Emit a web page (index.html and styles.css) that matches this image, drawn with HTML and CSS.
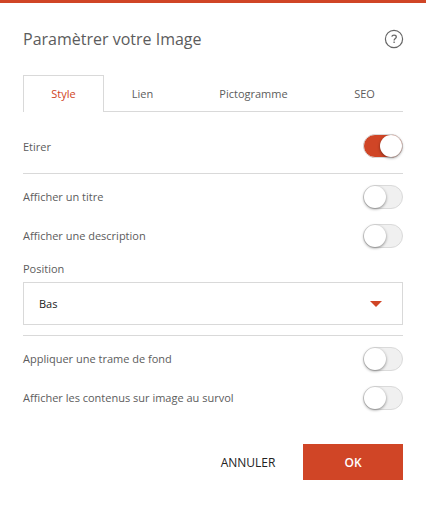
FILE: index.html
```html
<!DOCTYPE html>
<html lang="fr">
<head>
	<meta charset="utf-8">
	<title>Paramètrer votre Image</title>
	<link rel="stylesheet" href="styles.css">
</head>
<body>
<section class="panel">
	<header class="header">
		<h1>Paramètrer votre Image</h1>
		<svg class="help" width="20" height="20" viewBox="0 0 20 20" fill="none" stroke="#666">
			<circle cx="10" cy="10" r="8.6" stroke-width="1.2"/>
			<path d="M7.8 7.7C8 6.7 8.8 6.2 10 6.2c1.400 0 2.300.7 2.300 1.800 0 1.500-2.200 1.700-2.200 3.600M10.100 12.600v1.500" stroke-width="1.300"/>
		</svg>
	</header>
	<nav class="tabs">
		<a class="tab active">Style</a>
		<a class="tab">Lien</a>
		<a class="tab wide">Pictogramme</a>
		<a class="tab">SEO</a>
	</nav>
	<div class="group first">
		<div class="row"><span>Etirer</span><span class="switch on"><i></i></span></div>
	</div>
	<div class="group">
		<div class="row"><span>Afficher un titre</span><span class="switch"><i></i></span></div>
		<div class="row"><span>Afficher une description</span><span class="switch"><i></i></span></div>
		<div class="label">Position</div>
		<div class="select"><span>Bas</span><i class="arrow"></i></div>
	</div>
	<div class="group">
		<div class="row"><span>Appliquer une trame de fond</span><span class="switch"><i></i></span></div>
		<div class="row"><span>Afficher les contenus sur image au survol</span><span class="switch"><i></i></span></div>
	</div>
	<footer class="footer">
		<button type="button" class="cancel">ANNULER</button>
		<button type="button" class="ok">OK</button>
	</footer>
</section>
</body>
</html>
```

FILE: styles.css
```css
* {
	box-sizing: border-box;
}
body {
	margin: 0;
	background: #fff;
	color: #5c5c5c;
	font-family: "Open Sans", sans-serif;
	font-size: 11px;
}
.panel {
	height: 505px;
	padding: 0 23px;
	border-top: 3px solid #d04526;
}
.header {
	display: flex;
	align-items: center;
	justify-content: space-between;
	height: 72px;
}
.header h1 {
	margin: 0;
	font-size: 16px;
	font-weight: 400;
}
.help {
	margin-right: -1px;
}
.tabs {
	display: flex;
	height: 37px;
}
.tab {
	width: 77px;
	border-bottom: 1px solid #d9d9d9;
	line-height: 37px;
	text-align: center;
}
.tab.wide {
	flex: 1;
}
.tab.active {
	width: 81px;
	border: 1px solid #d9d9d9;
	border-bottom: 0;
	line-height: 35px;
	color: #d04526;
}
.group {
	padding-top: 3px;
	border-top: 1px solid #d9d9d9;
}
.group.first {
	padding: 14px 0 7px;
	border-top: 0;
}
.row {
	display: flex;
	align-items: center;
	justify-content: space-between;
	height: 39px;
}
.first .row {
	height: 40px;
}
.switch {
	display: flex;
	width: 40px;
	height: 24px;
	border: 1px solid #dadada;
	border-radius: 12px;
	background: #f0f0f0;
}
.switch i {
	width: 22px;
	height: 22px;
	border-radius: 50%;
	background: #fff;
	box-shadow: 0 1px 3px rgba(0,0,0,0.45);
}
.switch.on {
	justify-content: flex-end;
	background: #d04526;
}
.label {
	height: 27px;
	line-height: 27px;
}
.select {
	display: flex;
	align-items: center;
	justify-content: space-between;
	height: 43px;
	margin-bottom: 10px;
	padding: 0 20px 0 15px;
	border: 1px solid #d9d9d9;
	color: #222;
}
.arrow {
	border: 6px solid transparent;
	border-top-color: #d04526;
	border-bottom: 0;
}
.footer {
	display: flex;
	justify-content: flex-end;
	margin-top: 27px;
}
.footer button {
	height: 36px;
	padding: 0;
	border: 0;
	font-family: inherit;
	font-size: 12px;
}
.cancel {
	width: 110px;
	background: none;
	color: #222;
}
.ok {
	width: 100px;
	background: #d04526;
	color: #fff;
	font-weight: 600;
}
```
